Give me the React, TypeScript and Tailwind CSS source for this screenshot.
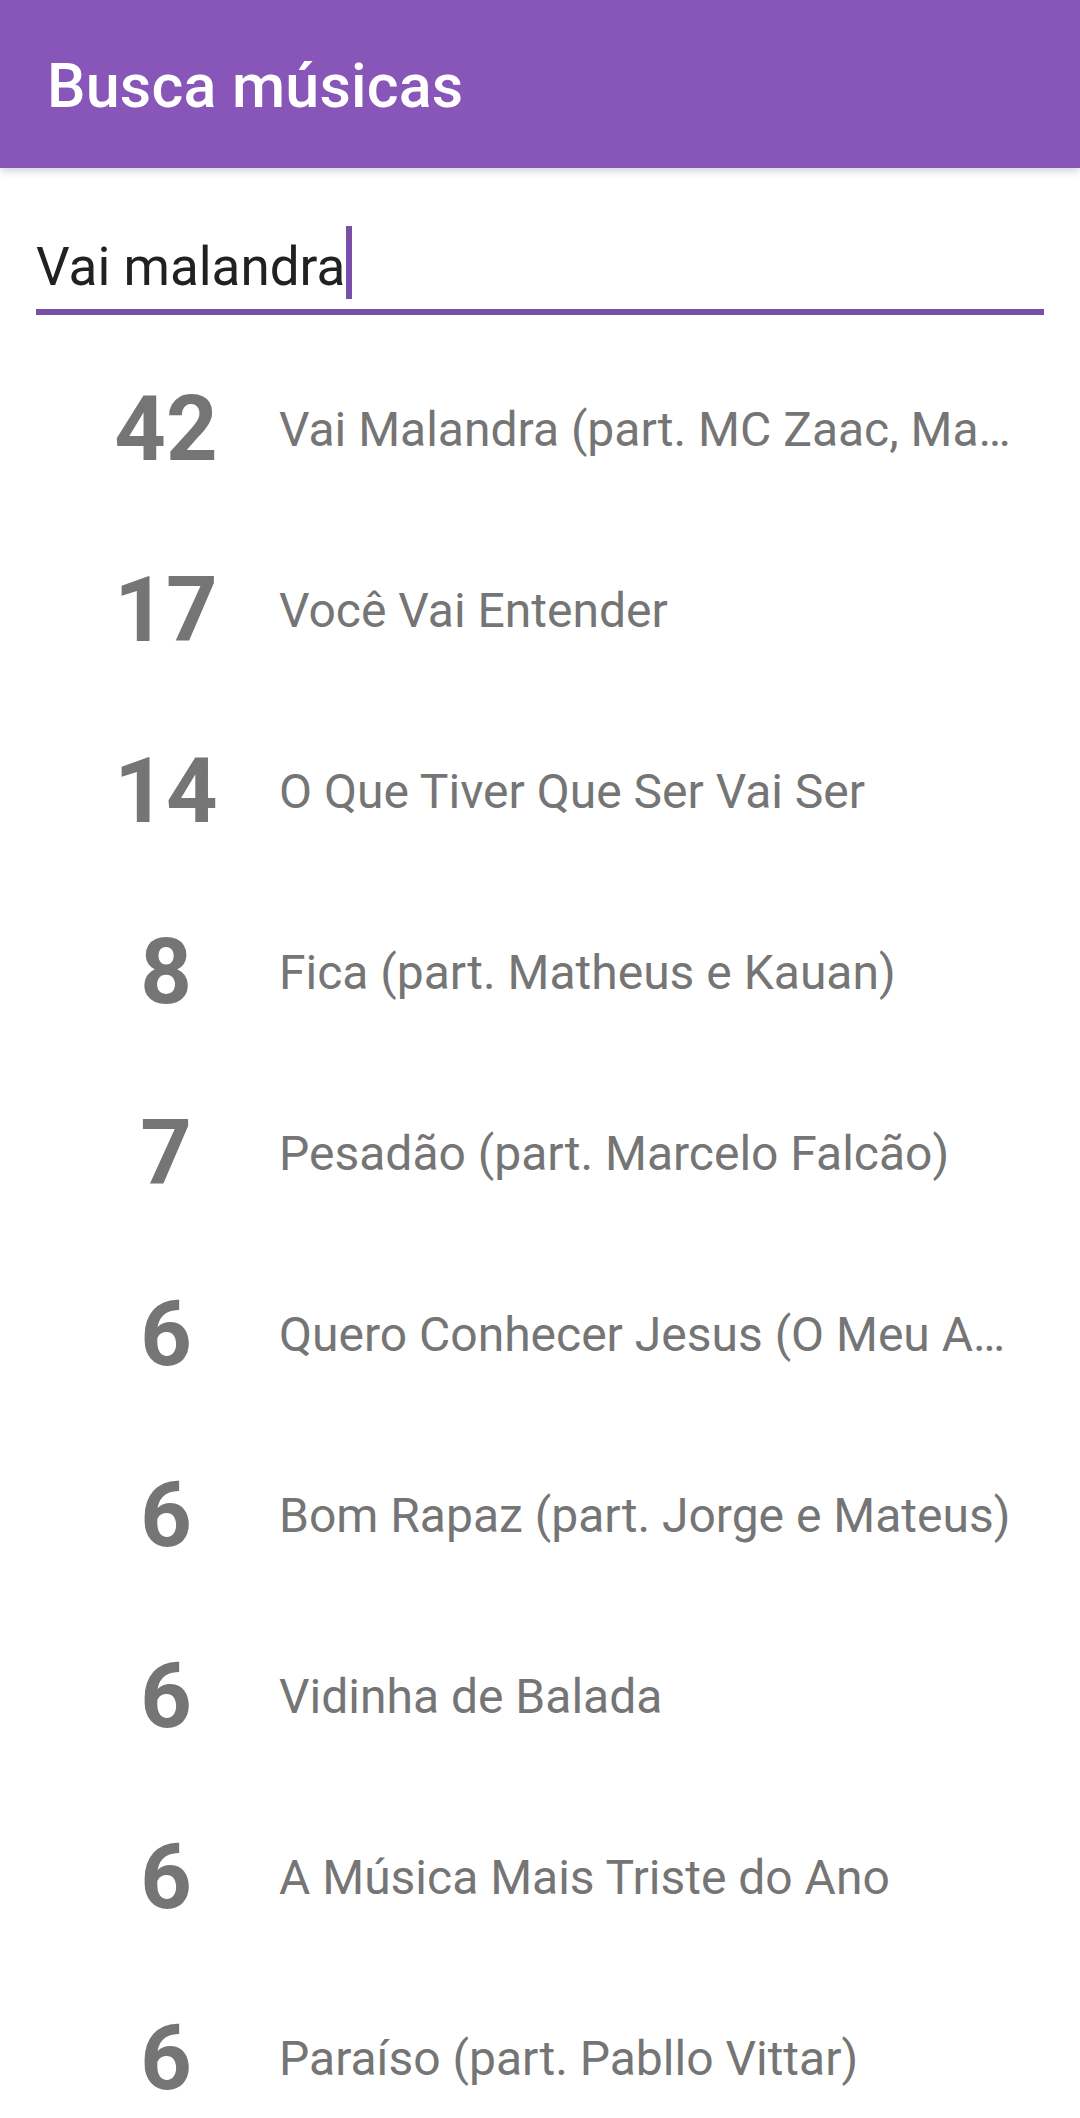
import React from "react";

const songs: { n: string; t: string }[] = [
  { n: "42", t: "Vai Malandra (part. MC Zaac, Ma…" },
  { n: "17", t: "Você Vai Entender" },
  { n: "14", t: "O Que Tiver Que Ser Vai Ser" },
  { n: "8", t: "Fica (part. Matheus e Kauan)" },
  { n: "7", t: "Pesadão (part. Marcelo Falcão)" },
  { n: "6", t: "Quero Conhecer Jesus (O Meu A…" },
  { n: "6", t: "Bom Rapaz (part. Jorge e Mateus)" },
  { n: "6", t: "Vidinha de Balada" },
  { n: "6", t: "A Música Mais Triste do Ano" },
  { n: "6", t: "Paraíso (part. Pabllo Vittar)" },
];

export default function App() {
  return (
    <div
      className="w-[1080px] h-[2118px] bg-white overflow-hidden flex flex-col"
      style={{ fontFamily: "Roboto, 'Noto Sans', sans-serif" }}
    >
      <div className="relative z-10 h-[168px] shrink-0 bg-[#8756b8] flex items-center pl-[47px] shadow-[0_3px_8px_rgba(0,0,0,0.18)]">
        <span className="mt-[4px] text-white text-[61px] font-medium leading-none tracking-[0.2px]">Busca músicas</span>
      </div>

      <div className="pt-[58px] px-[36px]">
        <div className="flex items-start">
          <span className="mt-[9px] text-[53px] leading-[64px] text-[#212121] whitespace-nowrap">
            Vai malandra
          </span>
          <div className="ml-[1px] w-[6px] h-[73px] bg-[#7a4fa7]" />
        </div>
        <div className="mt-[10px] h-[6px] bg-[#7a4fa7]" />
      </div>

      <div className="mt-[24px] flex flex-col">
        {songs.map((s, i) => (
          <div key={i} className="h-[181px] flex items-center shrink-0">
            <div className="ml-[76px] w-[180px] shrink-0 text-center text-[90px] font-bold leading-[106px] text-[#757575]">
              {s.n}
            </div>
            <div className="ml-[23px] pr-[36px] min-w-0 text-[48px] leading-[64px] text-[#757575] whitespace-nowrap overflow-hidden">
              {s.t}
            </div>
          </div>
        ))}
      </div>
    </div>
  );
}
